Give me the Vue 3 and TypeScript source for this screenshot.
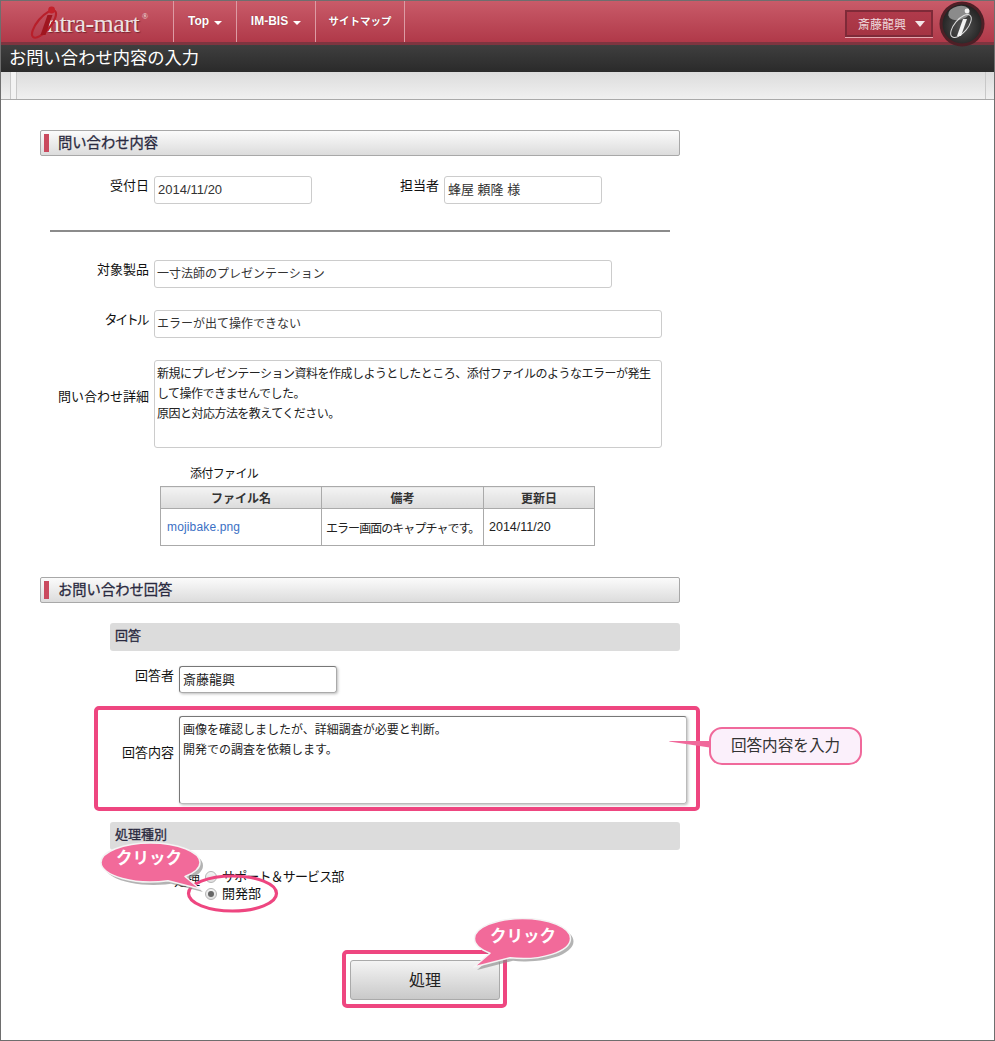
<script setup lang="ts">
interface Attachment { name: string; note: string; date: string }
const attachments: Attachment[] = [
  { name: 'mojibake.png', note: 'エラー画面のキャプチャです。', date: '2014/11/20' },
]
const navItems: { label: string; caret: boolean }[] = [
  { label: 'Top', caret: true },
  { label: 'IM-BIS', caret: true },
  { label: 'サイトマップ', caret: false },
]
</script>

<template>
  <div class="frame">
    <header class="topbar">
      <div class="logo">
        <span class="logo-text">ntra-mart</span><span class="logo-reg">®</span>
        <svg class="logo-mark" width="42" height="40" viewBox="0 0 42 40" aria-hidden="true">
          <ellipse cx="14" cy="22" rx="6.5" ry="17" transform="rotate(40 14 22)" fill="none" stroke="#b81f2a" stroke-width="2.2" />
          <path d="M17.5 13 L22.5 13 L15.5 33 L10.5 33 Z" fill="#a0161f" />
          <circle cx="21.6" cy="8" r="3.4" fill="#c3212b" />
        </svg>
      </div>
      <nav class="nav">
        <a v-for="item in navItems" :key="item.label" class="nav-item">
          {{ item.label }}<i v-if="item.caret" class="caret"></i>
        </a>
      </nav>
      <div class="user-area">
        <div class="user-btn"><span>斎藤龍興</span><i class="user-caret"></i></div>
        <div class="i-badge">
          <svg width="46" height="46" viewBox="0 0 46 46" aria-hidden="true">
            <defs>
              <radialGradient id="ballGrad" cx="50%" cy="55%" r="55%">
                <stop offset="0" stop-color="#555" />
                <stop offset="1" stop-color="#222" />
              </radialGradient>
            </defs>
            <circle cx="23" cy="23" r="22.5" fill="#4e1f26" />
            <circle cx="23" cy="23" r="19.5" fill="url(#ballGrad)" />
            <ellipse cx="20" cy="12" rx="11" ry="7" fill="#8b8b8b" transform="rotate(-12 20 12)" />
            <ellipse cx="22" cy="25" rx="6.5" ry="14" transform="rotate(40 22 25)" fill="none" stroke="#ddd" stroke-width="1" />
            <path d="M24 18 L28 18 L22 35 L18 35 Z" fill="#f2f2f2" />
            <circle cx="28" cy="10" r="2.4" fill="#f2f2f2" />
          </svg>
        </div>
      </div>
    </header>
    <div class="titlebar">お問い合わせ内容の入力</div>
    <div class="toolbar"><i class="tool-gap"></i><i class="tool-end"></i></div>

    <main class="content">
      <h2 class="section">問い合わせ内容</h2>

      <div class="row row-double">
        <label class="lbl">受付日</label>
        <div class="field w158 latin">2014/11/20</div>
        <label class="lbl lbl-second">担当者</label>
        <div class="field w158 latin">蜂屋 頼隆 様</div>
      </div>

      <hr class="rule" />

      <div class="row row-product">
        <label class="lbl">対象製品</label>
        <div class="field w458">一寸法師のプレゼンテーション</div>
      </div>
      <div class="row row-title">
        <label class="lbl lbl-kana">タイトル</label>
        <div class="field w508">エラーが出て操作できない</div>
      </div>
      <div class="row row-detail">
        <label class="lbl lbl-mid">問い合わせ詳細</label>
        <div class="area area-tight w508">新規にプレゼンテーション資料を作成しようとしたところ、添付ファイルのようなエラーが発生して操作できませんでした。<br />原因と対応方法を教えてください。</div>
      </div>

      <div class="attach-title">添付ファイル</div>
      <table class="files">
        <thead>
          <tr><th class="c1">ファイル名</th><th class="c2">備考</th><th class="c3">更新日</th></tr>
        </thead>
        <tbody>
          <tr v-for="a in attachments" :key="a.name">
            <td class="link">{{ a.name }}</td>
            <td class="note-cell">{{ a.note }}</td>
            <td class="date-cell">{{ a.date }}</td>
          </tr>
        </tbody>
      </table>

      <h2 class="section section-answer">お問い合わせ回答</h2>

      <div class="sub">回答</div>
      <div class="row row-answerer">
        <label class="lbl lbl-sub">回答者</label>
        <div class="field field-live w158">斎藤龍興</div>
      </div>
      <div class="row row-answer">
        <label class="lbl lbl-sub lbl-mid">回答内容</label>
        <div class="area area-live">画像を確認しましたが、詳細調査が必要と判断。<br />開発での調査を依頼します。</div>
      </div>

      <div class="sub sub-kind">処理種別</div>
      <div class="kind">
        <label class="lbl lbl-kind">処理</label>
        <div class="radios">
          <div class="radio-row radio-long"><i class="radio"></i>サポート＆サービス部</div>
          <div class="radio-row"><i class="radio radio-on"></i>開発部</div>
        </div>
      </div>

      <div class="submit-wrap"><button class="submit" type="button">処理</button></div>
    </main>

    <!-- annotations drawn over the form -->
    <div class="hl hl-answer"></div>
    <div class="hl hl-submit"></div>
    <svg class="hl-oval" width="94" height="40" viewBox="0 0 94 40" aria-hidden="true">
      <ellipse cx="46.5" cy="19.5" rx="44" ry="17.5" fill="none" stroke="#ee4680" stroke-width="3.2" />
    </svg>

    <svg class="note-tail" width="48" height="12" viewBox="0 0 48 12" aria-hidden="true">
      <path d="M0 3.5 Q0 3 1 3 L44 3 L44 10 Z" fill="#f0699b" />
    </svg>
    <div class="note">回答内容を入力</div>

    <svg class="bubble-svg b1" width="112" height="60" viewBox="0 0 112 60" aria-hidden="true">
      <path d="M2 21.5 A49.5 19.5 0 0 1 101 21.5 A49.5 19.5 0 0 1 86 35.5 L101 48 L69 39.7 A49.5 19.5 0 0 1 2 21.5 Z" fill="#8a8a8a" opacity=".65" transform="translate(3 3)" />
      <path d="M2 21.5 A49.5 19.5 0 0 1 101 21.5 A49.5 19.5 0 0 1 86 35.5 L101 48 L69 39.7 A49.5 19.5 0 0 1 2 21.5 Z" fill="#f26a9a" stroke="#f4f4f4" stroke-width="1.5" stroke-linejoin="round" />
    </svg>
    <div class="bubble-text t1">クリック</div>

    <svg class="bubble-svg b2" width="112" height="60" viewBox="0 0 112 60" aria-hidden="true">
      <path d="M4.5 25.5 A48 20 0 0 1 100.5 25.5 A48 20 0 0 1 40 44.8 L4 54 L20 40.2 A48 20 0 0 1 4.5 25.5 Z" fill="#8a8a8a" opacity=".65" transform="translate(3 3)" />
      <path d="M4.5 25.5 A48 20 0 0 1 100.5 25.5 A48 20 0 0 1 40 44.8 L4 54 L20 40.2 A48 20 0 0 1 4.5 25.5 Z" fill="#f26a9a" stroke="#f4f4f4" stroke-width="1.5" stroke-linejoin="round" />
    </svg>
    <div class="bubble-text t2">クリック</div>
  </div>
</template>

<style>
html, body { margin: 0; padding: 0; background: #fff; }
</style>

<style scoped>
.frame {
  position: relative;
  width: 995px;
  height: 1041px;
  box-sizing: border-box;
  border: 1px solid #6e6e6e;
  overflow: hidden;
  font-family: "Liberation Sans", "Noto Sans CJK JP", sans-serif;
  font-size: 13px;
  color: #111;
  background: #fff;
}
.topbar {
  height: 44px;
  box-sizing: border-box;
  display: flex;
  align-items: stretch;
  background: linear-gradient(#c95b69, #b03949);
  border-bottom: 3px solid #7e3540;
}
.logo {
  width: 173px;
  flex: none;
  position: relative;
  box-sizing: border-box;
  border-right: 1px solid #dd9ba4;
  color: #ece2e2;
  font-family: "Liberation Serif", serif;
}
.logo-mark { position: absolute; left: 29px; top: 1px; }
.logo-text {
  position: absolute;
  left: 46px;
  top: 9px;
  font-size: 26px;
  line-height: 28px;
  letter-spacing: -.5px;
  white-space: nowrap;
  text-shadow: 1px 1px 1px #7a2530;
}
.logo-reg { position: absolute; left: 141px; top: 12px; font-size: 8px; line-height: 8px; }
.nav { display: flex; }
.nav-item {
  display: flex;
  align-items: flex-start;
  padding-top: 13px;
  box-sizing: border-box;
  justify-content: center;
  color: #fff;
  font-weight: bold;
  font-size: 12px;
  line-height: 14px;
  border-right: 1px solid #dd9ba4;
  text-shadow: 0 0 1px #7a2530;
  white-space: nowrap;
}
.nav-item:nth-child(1) { width: 63px; }
.nav-item:nth-child(2) { width: 79px; }
.nav-item:nth-child(3) { width: 89px; font-size: 10.5px; }
.caret {
  width: 0; height: 0;
  margin: 7px 0 0 5px;
  border-left: 4px solid transparent;
  border-right: 4px solid transparent;
  border-top: 4px solid #fff;
}
.user-area { margin-left: auto; display: flex; align-items: flex-start; position: relative; }
.user-btn {
  margin: 9px 61px 0 0;
  width: 88px;
  height: 27px;
  box-sizing: border-box;
  background: linear-gradient(#b03a4b, #a53443);
  border: 2px solid #7e2a38;
  box-shadow: 0 1px 0 #e7a8b0;
  color: #f0dcdf;
  font-size: 12px;
  display: flex;
  align-items: center;
  padding-left: 11px;
  gap: 9px;
}
.user-caret {
  width: 0; height: 0;
  margin-top: 1px;
  border-left: 5px solid transparent;
  border-right: 5px solid transparent;
  border-top: 6px solid #f3e6e7;
}
.i-badge { position: absolute; right: 9px; top: 0; width: 46px; height: 46px; z-index: 2; }
.titlebar {
  height: 27px;
  box-sizing: border-box;
  padding-left: 8px;
  background: linear-gradient(#3f3f3f, #2a2a2a);
  color: #fff;
  font-size: 17.3px;
  line-height: 27px;
  white-space: nowrap;
}
.toolbar {
  height: 28px;
  box-sizing: border-box;
  background: linear-gradient(#dcdcdc, #f0f0f0);
  border-bottom: 1px solid #a9a9a9;
  position: relative;
}
.tool-gap { position: absolute; left: 9px; top: 0; bottom: 0; width: 5px; border-left: 1px solid #c8c8c8; border-right: 1px solid #c8c8c8; background: #f3f3f3; }
.tool-end { position: absolute; right: 8px; top: 0; bottom: 0; border-left: 1px solid #c8c8c8; }
.content { padding: 30px 0 0 39px; }
.section {
  margin: 0;
  width: 640px;
  height: 26px;
  box-sizing: border-box;
  border: 1px solid #a8a8a8;
  border-radius: 2px;
  background: linear-gradient(#fbfbfb, #dcdcdc);
  color: #2a2a40;
  font-size: 14.3px;
  font-weight: normal;
  line-height: 24px;
  padding-left: 17px;
  position: relative;
  -webkit-text-stroke: .3px #2a2a40;
}
.section::before {
  content: "";
  position: absolute;
  left: 3px;
  top: 3px;
  bottom: 3px;
  width: 5px;
  background: #ca4a5e;
}
.row { display: flex; align-items: flex-start; }
.lbl { width: 109px; text-align: right; padding-top: 1px; line-height: 18px; flex: none; white-space: nowrap; }
.lbl-kana { letter-spacing: -2.4px; width: 107px; padding-right: 2px; }
.field {
  box-sizing: border-box;
  height: 28px;
  margin-left: 5px;
  border: 1px solid #ccc;
  border-radius: 3px;
  padding-left: 2px;
  line-height: 26px;
  font-size: 12px;
  color: #333;
  white-space: nowrap;
}
.latin { font-size: 13px; padding-left: 3px; }
.w158 { width: 158px; }
.w458 { width: 458px; }
.w508 { width: 508px; }
.row-double { margin-top: 20px; }
.lbl-second { width: 127px; }
.rule { width: 620px; height: 0; border: 0; border-top: 2px solid #8b8b8b; margin: 26px 0 0 10px; }
.row-product { margin-top: 28px; }
.row-title { margin-top: 22px; }
.row-detail { margin-top: 22px; }
.lbl-mid { padding-top: 28px; }
.area {
  box-sizing: border-box;
  height: 88px;
  margin-left: 5px;
  border: 1px solid #ccc;
  border-radius: 3px;
  padding: 3px 2px;
  font-size: 12px;
  line-height: 20px;
  color: #222;
}
.area-tight { letter-spacing: -.52px; }
.attach-title { margin: 17px 0 0 150px; line-height: 18px; font-size: 12px; letter-spacing: -.65px; }
.files {
  margin: 3px 0 0 120px;
  border-collapse: collapse;
  font-size: 12px;
  table-layout: fixed;
  width: 434px;
}
.files th {
  height: 21px;
  padding: 0;
  border: 1px solid #aaa;
  background: linear-gradient(#f3f3f3, #dcdcdc);
  color: #333;
  font-weight: bold;
}
.files td {
  height: 36px;
  padding: 0 0 0 5px;
  border: 1px solid #aaa;
  color: #222;
  white-space: nowrap;
}
.files td.link { padding-left: 6px; color: #3a6fc4; letter-spacing: .15px; }
.files td.note-cell { letter-spacing: -.95px; padding-left: 4px; }
.files td.date-cell { font-size: 12.5px; }
.c1 { width: 160px; }
.c2 { width: 161px; }
.c3 { width: 110px; }
.section-answer { margin-top: 31px; }
.sub {
  margin: 20px 0 0 70px;
  width: 570px;
  height: 28px;
  box-sizing: border-box;
  border-radius: 3px;
  background: #dcdcdc;
  color: #2a2a40;
  line-height: 26px;
  padding-left: 5px;
  -webkit-text-stroke: .3px #2a2a40;
}
.lbl-sub { width: 134px; }
.row-answerer { margin-top: 15px; }
.field-live { border-color: #777 #aaa #aaa #777; box-shadow: 1px 1px 3px #bbb; font-size: 13px; color: #222; height: 27px; padding-left: 3px; }
.row-answer { margin-top: 23px; }
.area-live {
  width: 508px;
  padding-left: 3px;
  border-color: #777 #bbb #bbb #777;
  box-shadow: 1px 1px 3px #bbb;
}
.sub-kind { margin-top: 18px; }
.kind { display: flex; margin-top: 18px; height: 36px; }
.lbl-kind { width: 160px; margin-top: 3px; }
.radios { margin-left: 5px; line-height: 17px; }
.radio-row { display: flex; align-items: center; height: 17px; gap: 5px; white-space: nowrap; }
.radio-long { letter-spacing: -.85px; }
.radio {
  width: 12px;
  height: 12px;
  box-sizing: border-box;
  border: 1px solid #b5b5b5;
  border-radius: 50%;
  background: linear-gradient(#f4f4f4, #dedede);
  position: relative;
}
.radio-on::after {
  content: "";
  position: absolute;
  left: 2px;
  top: 2px;
  width: 6px;
  height: 6px;
  border-radius: 50%;
  background: #666;
}
.submit-wrap { margin: 56px 0 0 310px; }
.submit {
  display: block;
  width: 150px;
  height: 40px;
  border: 1px solid #aaa;
  border-radius: 3px;
  background: linear-gradient(#f4f4f4, #c9c9c9);
  font-family: inherit;
  font-size: 16px;
  color: #222;
  padding: 0 0 3px;
}
.hl { position: absolute; box-sizing: border-box; border: 4px solid #ee4680; border-radius: 5px; }
.hl-answer { left: 93px; top: 705px; width: 606px; height: 105px; }
.hl-submit { left: 341px; top: 949px; width: 165px; height: 58px; }
.hl-oval { position: absolute; left: 185px; top: 873px; }
.note {
  position: absolute;
  left: 708px;
  top: 726px;
  width: 153px;
  height: 38px;
  box-sizing: border-box;
  border: 2px solid #f0699b;
  border-radius: 13px;
  background: #fbf0fb;
  color: #333;
  font-size: 15.6px;
  line-height: 34px;
  text-align: center;
  white-space: nowrap;
}
.note-tail { position: absolute; left: 668px; top: 737px; }
.bubble-svg { position: absolute; }
.b1 { left: 98px; top: 840px; }
.b2 { left: 469px; top: 912px; }
.bubble-text {
  position: absolute;
  color: #fff;
  font-size: 16.5px;
  font-weight: bold;
  line-height: 20px;
  white-space: nowrap;
}
.t1 { left: 115px; top: 847px; }
.t2 { left: 489px; top: 925px; }
</style>
